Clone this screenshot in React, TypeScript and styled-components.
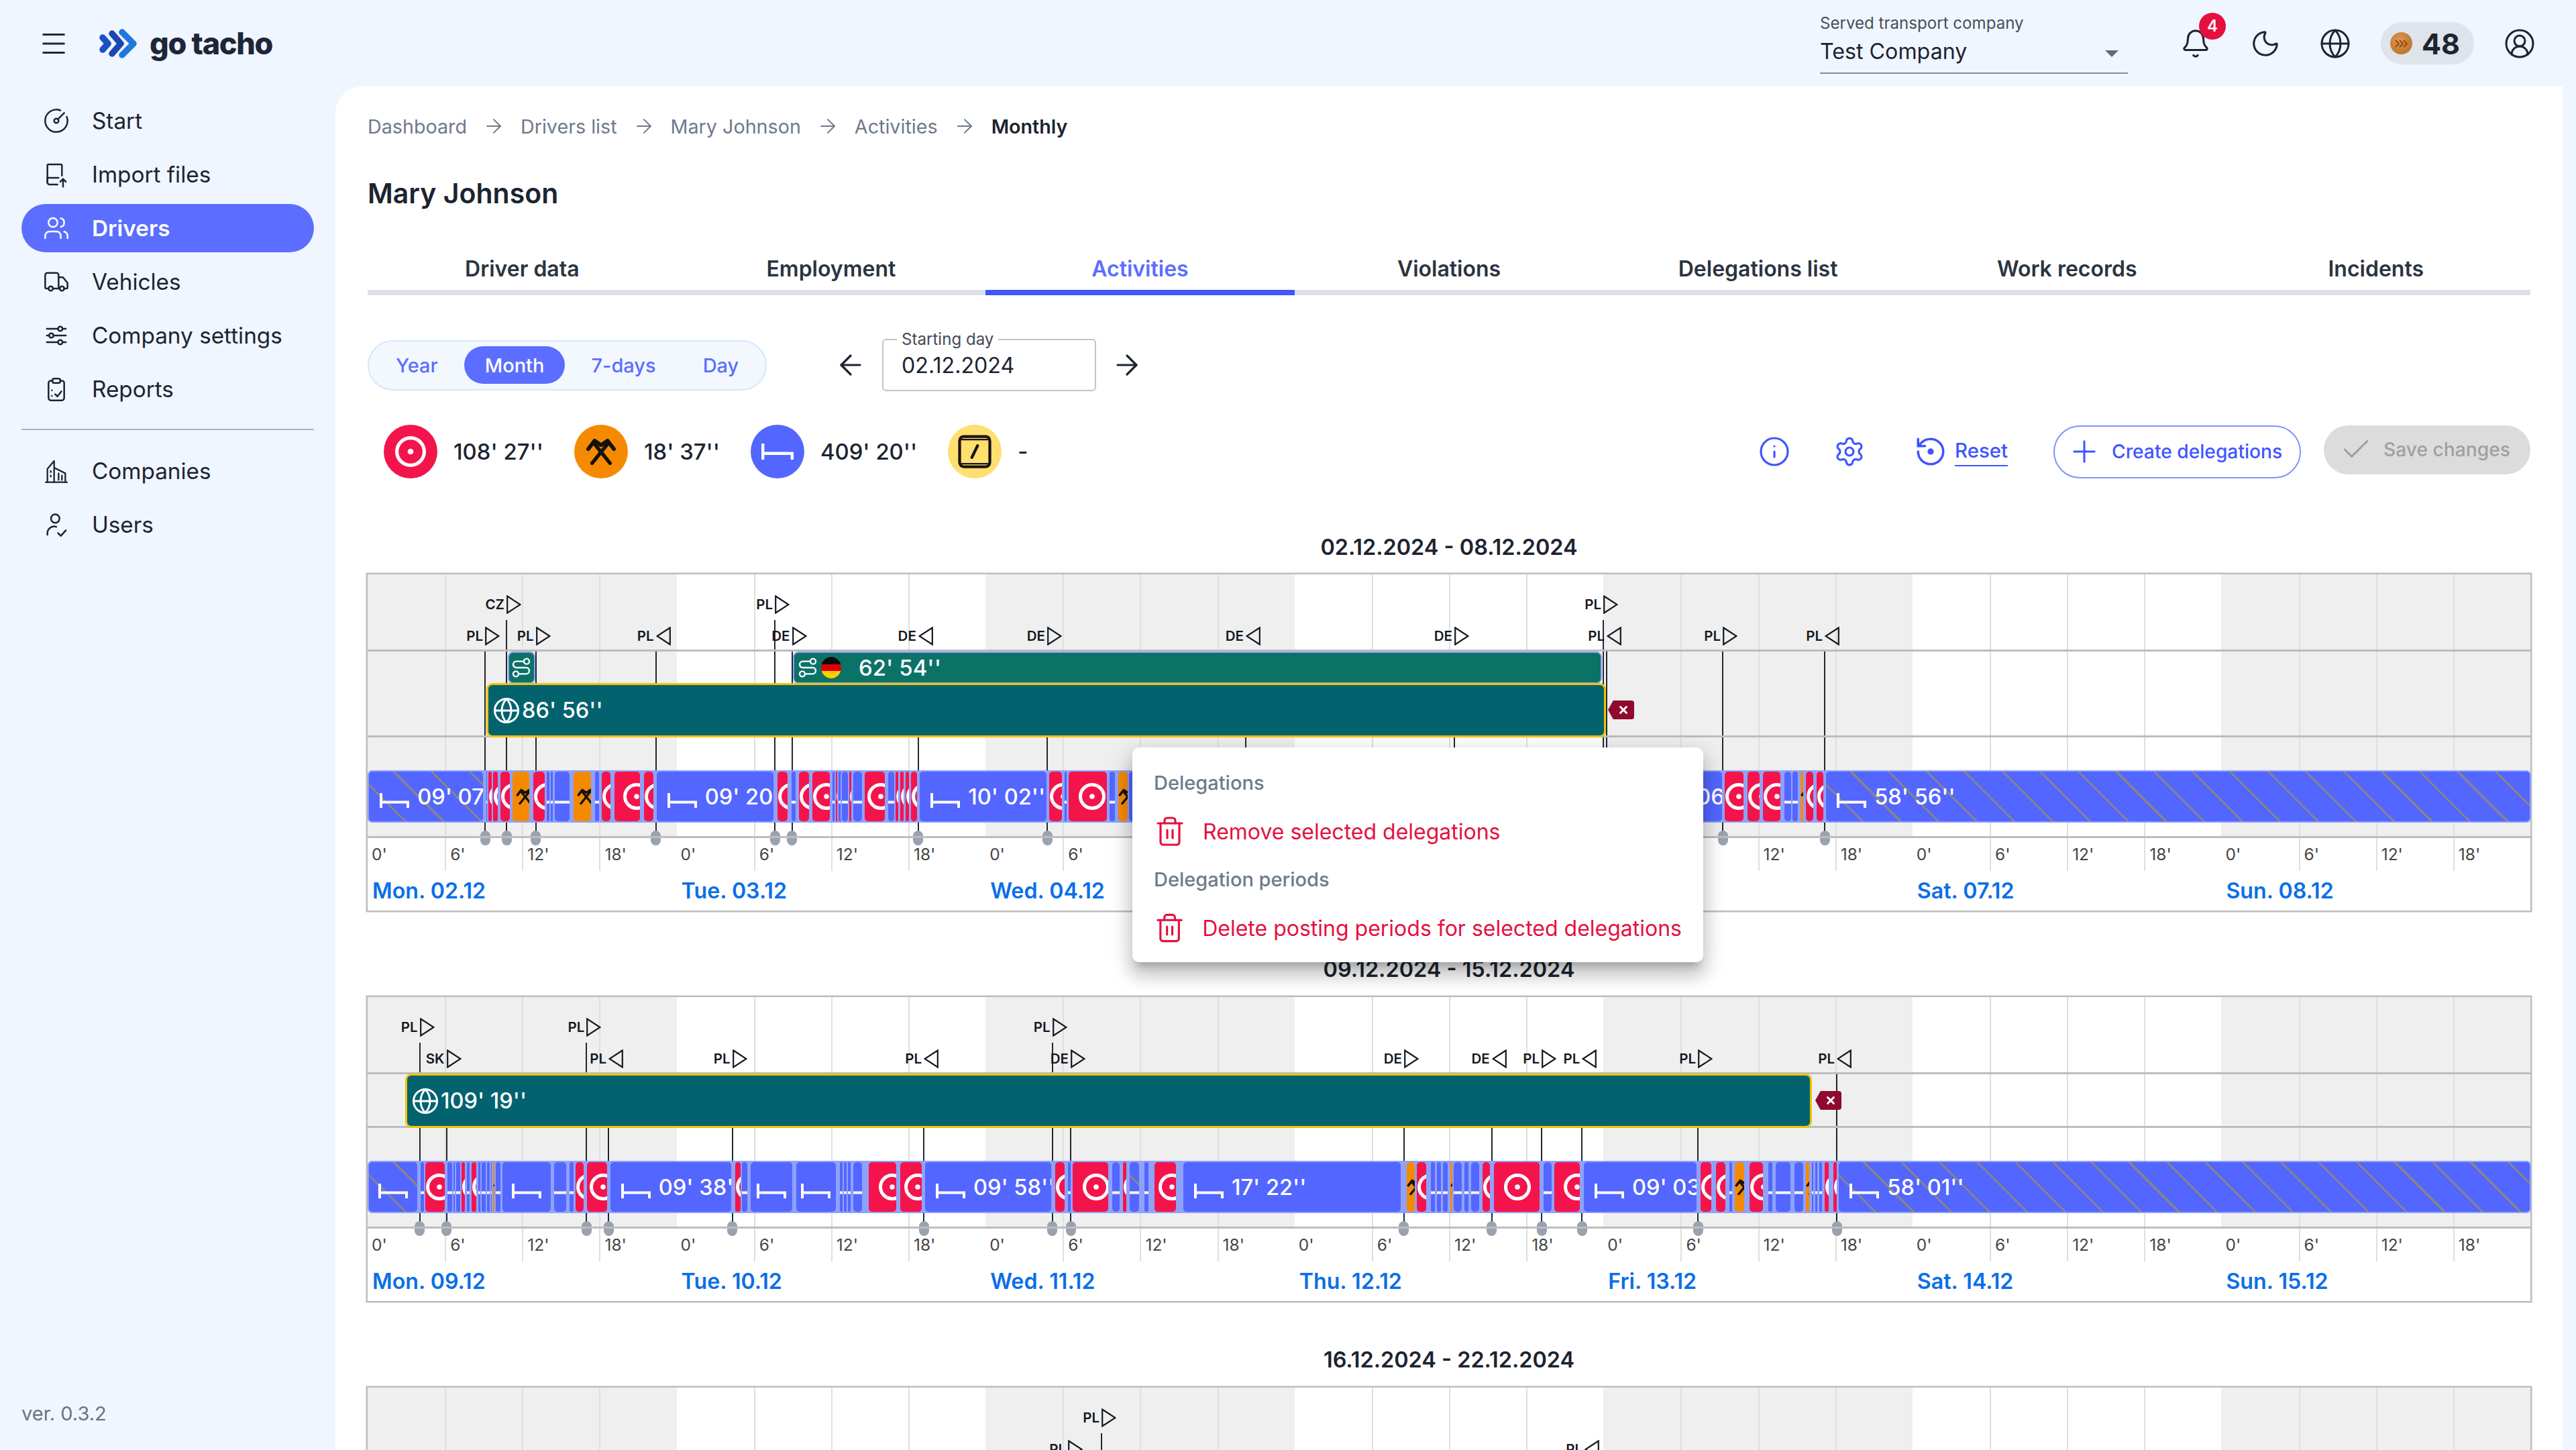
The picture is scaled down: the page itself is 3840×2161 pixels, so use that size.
import React from 'react'
import styled, { createGlobalStyle } from 'styled-components'
import {
  ArrowLeft,
  ArrowRight,
  Bell,
  Check,
  CircleGauge,
  CircleUserRound,
  Globe,
  Info,
  Menu,
  Moon,
  Plus,
  Route,
  Settings,
  Trash2,
  Truck,
  Users,
  X,
} from 'lucide-react'

const ORIGIN = 548
const BLUE = '#5366ff'
const RED = '#f4144b'
const ORANGE = '#f58a00'
const EDGE = '#8ea2fa'

const GlobalStyle = createGlobalStyle`
  html, body { margin: 0; padding: 0; background: #f0f6ff; overflow: hidden; }
  body { font-family: Inter, "Liberation Sans", sans-serif; color: #1f2937; }
  * { box-sizing: border-box; }
`

type SegKind = 'r' | 'h' | 'd' | 'w'
type SegRow = [SegKind, number, number, string?]
type Marker = { x: number; code: string; dir: 'in' | 'out'; row: 0 | 1 }

const scaled = (offset: number, rows: SegRow[]) =>
  rows.map(([k, a, b, label]) => [k, a / 1.3067 + offset, b / 1.3067 + offset, label] as SegRow)

const week1Segments: SegRow[] = [
  ...scaled(530, [
    ['h', 25, 250, "09' 07''"],
    ['r', 254, 262],
    ['d', 258, 266],
    ['d', 266, 278],
    ['d', 281, 302],
    ['w', 305, 340],
    ['d', 345, 370],
    ['r', 371, 379],
    ['r', 379, 386],
    ['r', 387, 418],
    ['w', 423, 460],
    ['r', 465, 476],
    ['d', 478, 498],
    ['d', 503, 555],
    ['d', 560, 582],
    ['r', 585, 815, "09' 20''"],
    ['d', 820, 843],
    ['r', 848, 859],
    ['d', 862, 884],
    ['d', 888, 925],
    ['r', 928, 935],
    ['d', 934, 941],
    ['r', 940, 947],
    ['r', 946, 960],
    ['d', 960, 967],
    ['r', 968, 988],
    ['d', 990, 1032],
    ['r', 1036, 1050],
    ['d', 1050, 1059],
    ['d', 1060, 1069],
    ['d', 1070, 1079],
    ['d', 1080, 1095],
    ['r', 1098, 1347, "10' 02''"],
    ['d', 1350, 1377],
    ['r', 1380, 1386],
    ['d', 1388, 1465],
    ['r', 1468, 1481],
    ['w', 1484, 1505],
    ['r', 1505, 1620],
  ]),
  ...scaled(1600, [
    ['r', 1040, 1265, "09' 06''"],
    ['d', 1268, 1307],
    ['d', 1312, 1338],
    ['d', 1342, 1378],
    ['r', 1384, 1400],
    ['r', 1400, 1412],
    ['w', 1415, 1423],
    ['d', 1425, 1442],
    ['d', 1447, 1462],
    ['h', 1465, 2838, "58' 56''"],
  ]),
]

const week2Segments: SegRow[] = [
  ...scaled(530, [
    ['h', 25, 122],
    ['r', 126, 134],
    ['d', 135, 175],
    ['r', 178, 190],
    ['r', 190, 196],
    ['r', 195, 205],
    ['d', 205, 214],
    ['r', 215, 223],
    ['d', 225, 236],
    ['r', 238, 246],
    ['r', 245, 256],
    ['r', 255, 263],
    ['r', 262, 269],
    ['w', 267, 272],
    ['r', 272, 284],
    ['r', 285, 382],
    ['r', 386, 411],
    ['r', 416, 426],
    ['d', 427, 445],
    ['d', 450, 491],
    ['r', 495, 733, "09' 38''"],
    ['d', 738, 751],
    ['r', 752, 765],
    ['r', 768, 852],
    ['r', 857, 937],
    ['r', 942, 951],
    ['r', 950, 959],
    ['r', 958, 966],
    ['r', 968, 988],
    ['d', 998, 1054],
    ['d', 1060, 1104],
    ['r', 1108, 1356, "09' 58''"],
    ['d', 1362, 1382],
    ['r', 1386, 1394],
    ['d', 1396, 1468],
    ['r', 1473, 1490],
    ['d', 1494, 1503],
    ['h', 1506, 1528],
    ['r', 1535, 1546],
    ['d', 1555, 1599],
    ['r', 1611, 2037, "17' 22''"],
  ]),
  ...scaled(1900, [
    ['w', 256, 274],
    ['d', 276, 297],
    ['r', 303, 313],
    ['r', 315, 326],
    ['r', 327, 339],
    ['w', 341, 347],
    ['r', 348, 366],
    ['r', 368, 379],
    ['r', 382, 400],
    ['d', 404, 421],
    ['d', 426, 518],
    ['r', 523, 541],
    ['d', 543, 596],
    ['r', 601, 823, "09' 03''"],
    ['d', 828, 852],
    ['d', 858, 879],
    ['r', 884, 892],
    ['w', 895, 916],
    ['d', 924, 952],
    ['r', 960, 971],
    ['r', 975, 1006],
    ['r', 1012, 1031],
    ['w', 1034, 1043],
    ['r', 1045, 1051],
    ['r', 1052, 1059],
    ['r', 1060, 1067],
    ['d', 1070, 1081],
    ['d', 1087, 1096],
    ['h', 1098, 2446, "58' 01''"],
  ]),
]

const week1Markers: Marker[] = [
  { x: 723, code: 'PL', dir: 'in', row: 1 },
  { x: 755, code: 'CZ', dir: 'in', row: 0 },
  { x: 798.6, code: 'PL', dir: 'in', row: 1 },
  { x: 977.7, code: 'PL', dir: 'out', row: 1 },
  { x: 1155, code: 'PL', dir: 'in', row: 0 },
  { x: 1180.5, code: 'DE', dir: 'in', row: 1 },
  { x: 1368.8, code: 'DE', dir: 'out', row: 1 },
  { x: 1561, code: 'DE', dir: 'in', row: 1 },
  { x: 1857, code: 'DE', dir: 'out', row: 1 },
  { x: 2168, code: 'DE', dir: 'in', row: 1 },
  { x: 2390, code: 'PL', dir: 'in', row: 0 },
  { x: 2395, code: 'PL', dir: 'out', row: 1 },
  { x: 2568, code: 'PL', dir: 'in', row: 1 },
  { x: 2720, code: 'PL', dir: 'out', row: 1 },
]

const week2Markers: Marker[] = [
  { x: 625.7, code: 'PL', dir: 'in', row: 0 },
  { x: 665.5, code: 'SK', dir: 'in', row: 1 },
  { x: 874.4, code: 'PL', dir: 'in', row: 0 },
  { x: 907, code: 'PL', dir: 'out', row: 1 },
  { x: 1091.7, code: 'PL', dir: 'in', row: 1 },
  { x: 1377, code: 'PL', dir: 'out', row: 1 },
  { x: 1568.5, code: 'PL', dir: 'in', row: 0 },
  { x: 1596, code: 'DE', dir: 'in', row: 1 },
  { x: 2092.9, code: 'DE', dir: 'in', row: 1 },
  { x: 2223.7, code: 'DE', dir: 'out', row: 1 },
  { x: 2298, code: 'PL', dir: 'in', row: 1 },
  { x: 2358.4, code: 'PL', dir: 'out', row: 1 },
  { x: 2531, code: 'PL', dir: 'in', row: 1 },
  { x: 2738, code: 'PL', dir: 'out', row: 1 },
]

const week3Markers: Marker[] = [
  { x: 1642, code: 'PL', dir: 'in', row: 0 },
  { x: 1592, code: 'PL', dir: 'in', row: 1 },
  { x: 2362, code: 'PL', dir: 'out', row: 1 },
]

const Page = styled.div`
  position: relative;
  width: 3840px;
  height: 2161px;
  overflow: hidden;
  display: grid;
  grid-template-columns: 500px 3320px;
  grid-template-rows: 129px 2032px;
  background: #f0f6ff;
`

const Header = styled.header`
  grid-column: 1 / -1;
  display: flex;
  align-items: center;
  padding: 0 40px 0 57px;
`

const LogoWrap = styled.div`
  display: flex;
  align-items: center;
  gap: 12px;
  margin-left: 44px;
`

const LogoText = styled.span`
  font-size: 45px;
  font-weight: 800;
  letter-spacing: -1.3px;
  color: #1e2738;
`

const HeaderRight = styled.div`
  margin-left: auto;
  display: flex;
  align-items: center;
  gap: 56px;
`

const CompanySelect = styled.div`
  position: relative;
  width: 459px;
  height: 90px;
  margin-right: 21px;
  border-bottom: 2px solid #8d8d8d;
`

const SelectLabel = styled.div`
  font-size: 24.1px;
  line-height: 30px;
  color: #4a4f57;
`

const SelectValue = styled.div`
  font-size: 32.2px;
  line-height: 42px;
  margin-top: 6px;
  color: #1c2430;
`

const Caret = styled.span`
  position: absolute;
  right: 14px;
  top: 55px;
  border-left: 10px solid transparent;
  border-right: 10px solid transparent;
  border-top: 10px solid #6b6b6b;
`

const HeaderIcon = styled.div`
  position: relative;
  width: 48px;
  height: 48px;
  display: flex;
  align-items: center;
  justify-content: center;
  color: #1c2430;
`

const Badge = styled.span`
  position: absolute;
  left: 29px;
  top: -22px;
  width: 40px;
  height: 40px;
  border-radius: 50%;
  background: #e5103f;
  color: #fff;
  font-size: 24px;
  font-weight: 600;
  display: flex;
  align-items: center;
  justify-content: center;
`

const CoinPill = styled.div`
  display: flex;
  align-items: center;
  gap: 14px;
  width: 139px;
  height: 63px;
  margin: 0 -12px;
  padding-left: 14px;
  border-radius: 32px;
  background: #dfe3ea;
  font-size: 43px;
  font-weight: 700;
  color: #1c2430;
`

const Coin = styled.span`
  width: 33px;
  height: 33px;
  flex: none;
  border-radius: 50%;
  display: flex;
  align-items: center;
  justify-content: center;
  background: radial-gradient(circle at 40% 35%, #dc9650, #b56a22);
`

const Sidebar = styled.aside`
  position: relative;
  padding-top: 11px;
`

const NavList = styled.nav`
  display: flex;
  flex-direction: column;
`

const NavItem = styled.div<{ $active?: boolean }>`
  display: flex;
  align-items: center;
  gap: 33px;
  width: 436px;
  height: 72px;
  margin: 4px 0 4px 32px;
  padding-left: 32px;
  border-radius: 36px;
  font-size: 33.3px;
  font-weight: ${(p) => (p.$active ? 600 : 400)};
  color: ${(p) => (p.$active ? '#fff' : '#1c2430')};
  background: ${(p) => (p.$active ? '#5b6eff' : 'transparent')};
`

const NavDivider = styled.hr`
  width: 436px;
  height: 2px;
  margin: 19px 0 21px 32px;
  border: 0;
  background: #aab0bb;
`

const Version = styled.div`
  position: absolute;
  left: 32px;
  bottom: 37px;
  font-size: 29px;
  color: #6b7280;
`

const Main = styled.main`
  background: #fff;
  border-top-left-radius: 40px;
  padding: 39px 48px 0;
  overflow: hidden;
`

const Breadcrumbs = styled.div`
  display: flex;
  align-items: center;
  gap: 23px;
  height: 40px;
  font-size: 28.7px;
  color: #6d7a8c;
`

const CrumbCurrent = styled.span`
  color: #1c2430;
  font-weight: 600;
`

const PageTitle = styled.h1`
  margin: 50px 0 0;
  height: 60px;
  line-height: 60px;
  font-size: 41px;
  font-weight: 600;
  color: #1c2430;
`

const Tabs = styled.div`
  display: flex;
  height: 80px;
  margin-top: 42px;
  border-bottom: 8px solid #dde0e6;
`

const Tab = styled.div<{ $active?: boolean }>`
  flex: 1;
  height: 80px;
  padding-top: 19px;
  text-align: center;
  font-size: 32px;
  line-height: 44px;
  font-weight: 600;
  color: ${(p) => (p.$active ? '#5b6eff' : '#2b3440')};
  border-bottom: 8px solid ${(p) => (p.$active ? '#3f55ff' : 'transparent')};
`

const RangeRow = styled.div`
  display: flex;
  align-items: center;
  height: 78px;
  margin-top: 65px;
`

const RangeToggle = styled.div`
  display: flex;
  align-items: center;
  gap: 8px;
  width: 595px;
  height: 75px;
  padding: 0 9px;
  border: 2px solid #d6e6fc;
  border-radius: 38px;
  background: #f3f8ff;
`

const RangeOption = styled.div<{ $active?: boolean }>`
  height: 56px;
  padding: 0 31px;
  display: flex;
  align-items: center;
  border-radius: 28px;
  font-size: 29px;
  font-weight: 500;
  white-space: nowrap;
  color: ${(p) => (p.$active ? '#fff' : '#5b6eff')};
  background: ${(p) => (p.$active ? '#5b6eff' : 'transparent')};
`

const ArrowButton = styled.div<{ $offset?: number }>`
  width: 48px;
  margin-left: ${(p) => p.$offset ?? 0}px;
  display: flex;
  justify-content: center;
  color: #1c2430;
`

const DateField = styled.div`
  position: relative;
  width: 319px;
  height: 78px;
  margin: 0 22px 0 23px;
  padding: 16px 27px 0;
  border: 2px solid #c4c4c4;
  border-radius: 6px;
  font-size: 32.2px;
  line-height: 44px;
  color: #1c2430;
`

const DateLabel = styled.span`
  position: absolute;
  left: 20px;
  top: -16px;
  padding: 0 7px;
  background: #fff;
  font-size: 24.1px;
  line-height: 30px;
  color: #444b55;
`

const ToolRow = styled.div`
  display: flex;
  align-items: center;
  height: 80px;
  margin-top: 50px;
`

const Stats = styled.div`
  display: flex;
  align-items: center;
  gap: 46px;
  padding-left: 24px;
`

const Stat = styled.div`
  display: flex;
  align-items: center;
  gap: 24px;
  font-size: 32.8px;
  font-weight: 500;
  color: #1c2430;
`

const StatCircle = styled.span<{ $bg: string }>`
  width: 80px;
  height: 80px;
  flex: none;
  border-radius: 50%;
  background: ${(p) => p.$bg};
  display: flex;
  align-items: center;
  justify-content: center;
`

const Actions = styled.div`
  margin-left: auto;
  display: flex;
  align-items: center;
  color: #3f55ff;
`

const ActionIcon = styled.span<{ $gap: number }>`
  display: flex;
  margin-right: ${(p) => p.$gap}px;
`

const ResetLink = styled.span`
  margin: 2px 68px 0 11px;
  font-size: 29.4px;
  font-weight: 500;
  padding-bottom: 4px;
  border-bottom: 2.5px solid #3f55ff;
`

const CreateButton = styled.div`
  display: flex;
  align-items: center;
  gap: 15px;
  width: 369px;
  height: 79px;
  padding-left: 18px;
  border: 2px solid #7f95f8;
  border-radius: 40px;
  font-size: 28.2px;
  font-weight: 500;
  white-space: nowrap;
`

const SaveButton = styled.div`
  display: flex;
  align-items: center;
  gap: 16px;
  width: 308px;
  height: 73px;
  margin: -6px 0 0 34px;
  padding-left: 23px;
  border-radius: 37px;
  background: #dcdcdc;
  color: #a0a0a0;
  font-size: 28.2px;
  font-weight: 500;
  white-space: nowrap;
`

const ChartTitle = styled.h2<{ $first?: boolean }>`
  margin: ${(p) => (p.$first ? '83px 0 20px' : '68px 0 21px')};
  height: 40px;
  line-height: 40px;
  text-align: center;
  font-size: 32.4px;
  font-weight: 600;
  color: #1c2430;
`

const Frame = styled.section`
  box-shadow: 0 0 0 2.5px #bdbdbd;
`

const Upper = styled.div`
  position: relative;
`

const Bands = styled.div`
  position: absolute;
  inset: 0;
  display: grid;
  grid-template-columns: repeat(7, 1fr);
`

const Band = styled.div<{ $shaded: boolean }>`
  display: grid;
  grid-template-columns: repeat(4, 1fr);
  background: ${(p) => (p.$shaded ? '#efefef' : '#fff')};
`

const BandSlot = styled.div`
  & + & {
    border-left: 2px solid #dfdfdf;
  }
`

const MarkerLayer = styled.div`
  position: absolute;
  inset: 0;
  z-index: 1;
`

const MarkerLine = styled.div<{ $row: 0 | 1 }>`
  position: absolute;
  top: ${(p) => (p.$row === 0 ? 68 : 115)}px;
  bottom: 0;
  width: 2px;
  background: #23272e;
`

const Knob = styled.span`
  position: absolute;
  left: -6.5px;
  bottom: -11px;
  width: 15px;
  height: 22px;
  border-radius: 8px;
  background: #9aa1b0;
`

const MarkerTag = styled.div<{ $row: 0 | 1 }>`
  position: absolute;
  top: ${(p) => (p.$row === 0 ? 31 : 78)}px;
  width: 22px;
  height: 28px;
`

const MarkerCode = styled.span`
  position: absolute;
  right: calc(100% + 3px);
  top: 0;
  line-height: 28px;
  font-size: 20.5px;
  font-weight: 600;
  color: #14181f;
`

const MarkerHead = styled.div`
  position: relative;
  z-index: 2;
  height: 115px;
  border-bottom: 3px solid #bdbdbd;
`

const DelegationRow = styled.div<{ $h: number; $last?: boolean }>`
  position: relative;
  z-index: 2;
  height: ${(p) => p.$h}px;
  border-bottom: ${(p) => (p.$last ? '3px solid #bdbdbd' : '0')};
`

const PostingBar = styled.div`
  position: absolute;
  top: 0;
  bottom: 0;
  display: flex;
  align-items: center;
  padding-left: 14px;
  border: 2.5px solid ${EDGE};
  border-radius: 8px;
  background: #0b7268;
  color: #fff;
  font-size: 33px;
  font-weight: 500;
  white-space: nowrap;
  overflow: hidden;
`

const Flag = styled.span`
  width: 30px;
  height: 32px;
  margin: 0 26px 0 4px;
  border-radius: 50%;
  background: linear-gradient(#0a0a0a 33%, #dd0000 33% 66%, #ffce00 66%);
`

const DelegationBar = styled.div`
  position: absolute;
  top: -1px;
  bottom: -3px;
  display: flex;
  align-items: center;
  gap: 2px;
  padding-left: 6px;
  border: 3px solid #f2c200;
  border-radius: 9px;
  background: #02636f;
  color: #fff;
  font-size: 32.5px;
  font-weight: 500;
`

const RemoveTag = styled.div`
  position: absolute;
  top: 25px;
  width: 39px;
  height: 28px;
  display: flex;
  align-items: center;
  justify-content: center;
  padding-left: 6px;
  background: #8f0a2e;
  color: #fff;
  clip-path: polygon(20% 0, 100% 0, 100% 100%, 20% 100%, 0 50%);
  border-radius: 4px;
`

const ActivityRow = styled.div`
  position: relative;
  z-index: 2;
  height: 150px;
  border-bottom: 3px solid #bdbdbd;
`

const ActivityTrack = styled.div`
  position: absolute;
  left: 0;
  right: 0;
  top: 49px;
  height: 78px;
  border-radius: 7px;
  background: ${EDGE};
`

const kindBackground: Record<SegKind, string> = {
  r: BLUE,
  h: `repeating-linear-gradient(45deg, ${BLUE} 0 37px, #85858a 37px 40px)`,
  d: RED,
  w: ORANGE,
}

const Segment = styled.div<{ $kind: SegKind; $center: boolean }>`
  position: absolute;
  top: 0;
  bottom: 0;
  display: flex;
  align-items: center;
  justify-content: ${(p) => (p.$center ? 'center' : 'flex-start')};
  border: 2px solid ${EDGE};
  border-radius: 7px;
  overflow: hidden;
  background: ${(p) => kindBackground[p.$kind]};
  color: #fff;
  font-size: 32.6px;
  font-weight: 500;
  white-space: nowrap;
`

const BedSlot = styled.span`
  display: flex;
  flex: none;
  margin-top: 12px;
`

const SegmentLabel = styled.span`
  flex: none;
  margin-left: 12px;
`

const TickRow = styled.div`
  display: grid;
  grid-template-columns: repeat(7, 1fr);
  height: 49px;
`

const TickDay = styled.div`
  display: grid;
  grid-template-columns: repeat(4, 1fr);
`

const Tick = styled.div`
  padding: 9px 0 0 6px;
  font-size: 24.5px;
  line-height: 30px;
  color: #444;
  & + & {
    border-left: 2px solid #dfdfdf;
  }
`

const DayRow = styled.div`
  display: grid;
  grid-template-columns: repeat(7, 1fr);
  height: 59px;
`

const DayName = styled.div`
  padding: 9px 0 0 7px;
  font-size: 32.2px;
  line-height: 42px;
  font-weight: 600;
  color: #0b6fe8;
`

const Popover = styled.div`
  position: absolute;
  left: 1688px;
  top: 1114px;
  z-index: 10;
  width: 851px;
  height: 320px;
  padding: 33px 32px 0;
  border-radius: 10px;
  background: #fff;
  box-shadow: 0 12px 12px -7px rgba(0, 0, 0, 0.2), 0 20px 24px 3px rgba(0, 0, 0, 0.14), 0 8px 34px 6px rgba(0, 0, 0, 0.12);
`

const PopoverHeading = styled.div`
  height: 40px;
  line-height: 40px;
  font-size: 29px;
  font-weight: 500;
  color: #6d7a8c;
`

const PopoverItem = styled.div`
  display: flex;
  align-items: center;
  gap: 25px;
  height: 72px;
  margin: 16px 0;
  font-size: 32px;
  white-space: nowrap;
  color: #e5103f;
`

const TargetGlyph = ({ size = 40, stroke = 5 }: { size?: number; stroke?: number }) => (
  <svg width={size} height={size} viewBox="0 0 40 40" style={{ flex: 'none' }}>
    <circle cx="20" cy="20" r={20 - stroke / 2} fill="none" stroke="#fff" strokeWidth={stroke} />
    <circle cx="20" cy="20" r="3.8" fill="#fff" />
  </svg>
)

const BedGlyph = ({ width = 44 }: { width?: number }) => (
  <svg width={width} height={width / 2} viewBox="0 0 44 22" style={{ flex: 'none' }}>
    <path d="M2 0v22M2 13.5h40V22" fill="none" stroke="#fff" strokeWidth="4" />
  </svg>
)

const HammerGlyph = ({ size = 28 }: { size?: number }) => (
  <svg width={size} height={size * 0.875} viewBox="0 0 24 21" style={{ flex: 'none' }}>
    <g fill="none" stroke="#14110d" strokeLinecap="round" strokeLinejoin="round">
      <path d="M5 19.5 16.8 4.8M19 19.5 7.2 4.8" strokeWidth="2.8" />
      <path d="M2 8.5 7 2l4.5 3.2M22 8.5 17 2l-4.5 3.2" strokeWidth="3" />
    </g>
  </svg>
)

const SegmentItem = ({ row }: { row: SegRow }) => {
  const [kind, from, to, label] = row
  const width = to - from + 2
  let content: React.ReactNode = null
  let paddingLeft = 0
  if (kind === 'd') {
    paddingLeft = width < 33 ? 1 : Math.min(15, (width - 33) * 1.2 + 3)
    content = <TargetGlyph />
  } else if (kind === 'w') {
    paddingLeft = width > 21 ? 5 : 0
    content = <HammerGlyph />
  } else if (label) {
    paddingLeft = 16
    content = (
      <>
        <BedSlot>
          <BedGlyph />
        </BedSlot>
        <SegmentLabel>{label}</SegmentLabel>
      </>
    )
  } else {
    content = (
      <BedSlot>
        <BedGlyph />
      </BedSlot>
    )
  }
  return (
    <Segment
      $kind={kind}
      $center={(kind === 'r' || kind === 'h') && !label}
      style={{ left: Math.max(0, from - 1 - ORIGIN), width, paddingLeft }}
    >
      {content}
    </Segment>
  )
}

const MarkerItem = ({ marker }: { marker: Marker }) => (
  <>
    <MarkerLine $row={marker.row} style={{ left: marker.x - ORIGIN - 1 }}>
      <Knob />
    </MarkerLine>
    <MarkerTag $row={marker.row} style={{ left: marker.x - ORIGIN }}>
      <MarkerCode>{marker.code}</MarkerCode>
      <svg width="22" height="28" viewBox="0 0 22 28" style={{ display: 'block' }}>
        <path
          d={marker.dir === 'in' ? 'M1.2 1.5 20.5 14 1.2 26.5Z' : 'M20.8 1.5 1.5 14l19.3 12.5Z'}
          fill="none"
          stroke="#14181f"
          strokeWidth="2.2"
        />
      </svg>
    </MarkerTag>
  </>
)

const days = [0, 1, 2, 3, 4, 5, 6]
const hours = ["0'", "6'", "12'", "18'"]

type WeekProps = {
  title: string
  first?: boolean
  dates: string[]
  markers: Marker[]
  segments: SegRow[]
  children: React.ReactNode
}

const WeekChart = ({ title, first, dates, markers, segments, children }: WeekProps) => (
  <>
    <ChartTitle $first={first}>{title}</ChartTitle>
    <Frame>
      <Upper>
        <Bands>
          {days.map((d) => (
            <Band key={d} $shaded={d % 2 === 0}>
              {hours.map((h) => (
                <BandSlot key={h} />
              ))}
            </Band>
          ))}
        </Bands>
        <MarkerLayer>
          {markers.map((m) => (
            <MarkerItem key={`${m.x}-${m.code}`} marker={m} />
          ))}
        </MarkerLayer>
        <MarkerHead />
        {children}
        <ActivityRow>
          <ActivityTrack>
            {segments.map((s, i) => (
              <SegmentItem key={i} row={s} />
            ))}
          </ActivityTrack>
        </ActivityRow>
      </Upper>
      <TickRow>
        {days.map((d) => (
          <TickDay key={d}>
            {hours.map((h) => (
              <Tick key={h}>{h}</Tick>
            ))}
          </TickDay>
        ))}
      </TickRow>
      <DayRow>
        {dates.map((d) => (
          <DayName key={d}>{d}</DayName>
        ))}
      </DayRow>
    </Frame>
  </>
)

const LogoMark = () => (
  <svg width="64" height="46" viewBox="0 0 64 46">
    <g fill="none" strokeWidth="9.5" strokeLinecap="round" strokeLinejoin="round">
      <path d="M6 14 14 23 6 32" stroke="#1d4fc4" />
      <path d="M20 8 33 23 20 38" stroke="#1c46b4" />
      <path d="M35 6 52 23 35 40" stroke="#1f78dc" />
    </g>
  </svg>
)

const ImportIcon = () => (
  <svg width="40" height="40" viewBox="0 0 24 24" fill="none" stroke="currentColor" strokeWidth="1.5" strokeLinecap="round" strokeLinejoin="round">
    <path d="M4 19V4a1 1 0 0 1 1-1h11a1 1 0 0 1 1 1v9" />
    <path d="M4 15h10M4 15v4a2 2 0 0 0 2 2h7" />
    <path d="M18 23v-7M15.5 18.5 18 16l2.5 2.5" />
  </svg>
)

const SettingsRowsIcon = () => (
  <svg width="40" height="40" viewBox="0 0 24 24" fill="none" stroke="currentColor" strokeWidth="1.5" strokeLinecap="round">
    <path d="M3.5 6h10M17.5 6h3M3.5 12h2M9.5 12h11M3.5 18h10M17.5 18h3" />
    <circle cx="15.5" cy="6" r="2" />
    <circle cx="7.5" cy="12" r="2" />
    <circle cx="15.5" cy="18" r="2" />
  </svg>
)

const ReportIcon = () => (
  <svg width="40" height="40" viewBox="0 0 24 24" fill="none" stroke="currentColor" strokeWidth="1.5" strokeLinecap="round" strokeLinejoin="round">
    <path d="M8.5 4.5H7a2 2 0 0 0-2 2V20a2 2 0 0 0 2 2h10a2 2 0 0 0 2-2V6.5a2 2 0 0 0-2-2h-1.5" />
    <rect x="8.5" y="2.5" width="7" height="4" rx="1.5" />
    <path d="M8 13h.01M8 18h.01M11 16.5l2 2 3.5-4.5" />
  </svg>
)

const BuildingIcon = () => (
  <svg width="40" height="40" viewBox="0 0 24 24" fill="none" stroke="currentColor" strokeWidth="1.4" strokeLinecap="round" strokeLinejoin="round">
    <path d="M2.5 22h19" />
    <path d="M4 22V10l6-7v19M10 9l10 5v8" />
    <path d="M7 12v1M7 16v1M14 14v6M17 16v4" />
  </svg>
)

const DriverIcon = () => (
  <svg width="40" height="40" viewBox="0 0 24 24" fill="none" stroke="currentColor" strokeWidth="1.5" strokeLinecap="round" strokeLinejoin="round">
    <circle cx="11" cy="6.5" r="3.8" />
    <path d="M4 21v-1.5a6 6 0 0 1 8-5.6" />
    <path d="m13.5 19.5 2.5 2.5 4.5-5" />
  </svg>
)

const ResetIcon = () => (
  <svg width="50" height="50" viewBox="0 0 24 24" fill="none" stroke="currentColor" strokeWidth="1.7" strokeLinecap="round" strokeLinejoin="round">
    <path d="M3 12a9 9 0 1 0 9-9 9.75 9.75 0 0 0-6.74 2.74L3 8" />
    <path d="M3 3v5h5" />
    <circle cx="12" cy="12" r="1.4" fill="currentColor" />
  </svg>
)

const LogbookIcon = () => (
  <svg width="60" height="60" viewBox="0 0 24 24" fill="none" stroke="#1a1410" strokeLinecap="round">
    <rect x="3" y="3" width="18" height="18" rx="2.5" strokeWidth="1.7" />
    <path d="M4 4.8h16M4 19.2h16" strokeWidth="0.9" />
    <path d="m10.3 15.5 3.4-7" strokeWidth="1.7" />
  </svg>
)

const App = () => (
  <Page>
    <GlobalStyle />
    <Header>
      <Menu size={46} strokeWidth={1.6} />
      <LogoWrap>
        <LogoMark />
        <LogoText>go tacho</LogoText>
      </LogoWrap>
      <HeaderRight>
        <CompanySelect>
          <SelectLabel>Served transport company</SelectLabel>
          <SelectValue>Test Company</SelectValue>
          <Caret />
        </CompanySelect>
        <HeaderIcon>
          <Bell size={46} strokeWidth={1.6} />
          <Badge>4</Badge>
        </HeaderIcon>
        <HeaderIcon>
          <Moon size={46} strokeWidth={1.6} />
        </HeaderIcon>
        <HeaderIcon>
          <Globe size={48} strokeWidth={1.5} />
        </HeaderIcon>
        <CoinPill>
          <Coin>
            <svg width="22" height="14" viewBox="0 0 22 14" fill="none" stroke="#8a4a10" strokeWidth="1.8">
              <path d="m2 2 5 5-5 5M8 2l5 5-5 5M14 2l5 5-5 5" />
            </svg>
          </Coin>
          48
        </CoinPill>
        <HeaderIcon>
          <CircleUserRound size={48} strokeWidth={1.5} />
        </HeaderIcon>
      </HeaderRight>
    </Header>

    <Sidebar>
      <NavList>
        <NavItem>
          <CircleGauge size={40} strokeWidth={1.5} />
          Start
        </NavItem>
        <NavItem>
          <ImportIcon />
          Import files
        </NavItem>
        <NavItem $active>
          <Users size={40} strokeWidth={1.5} />
          Drivers
        </NavItem>
        <NavItem>
          <Truck size={40} strokeWidth={1.5} />
          Vehicles
        </NavItem>
        <NavItem>
          <SettingsRowsIcon />
          Company settings
        </NavItem>
        <NavItem>
          <ReportIcon />
          Reports
        </NavItem>
        <NavDivider />
        <NavItem>
          <BuildingIcon />
          Companies
        </NavItem>
        <NavItem>
          <DriverIcon />
          Users
        </NavItem>
      </NavList>
      <Version>ver. 0.3.2</Version>
    </Sidebar>

    <Main>
      <Breadcrumbs>
        <span>Dashboard</span>
        <ArrowRight size={34} strokeWidth={1.4} />
        <span>Drivers list</span>
        <ArrowRight size={34} strokeWidth={1.4} />
        <span>Mary Johnson</span>
        <ArrowRight size={34} strokeWidth={1.4} />
        <span>Activities</span>
        <ArrowRight size={34} strokeWidth={1.4} />
        <CrumbCurrent>Monthly</CrumbCurrent>
      </Breadcrumbs>
      <PageTitle>Mary Johnson</PageTitle>
      <Tabs>
        <Tab>Driver data</Tab>
        <Tab>Employment</Tab>
        <Tab $active>Activities</Tab>
        <Tab>Violations</Tab>
        <Tab>Delegations list</Tab>
        <Tab>Work records</Tab>
        <Tab>Incidents</Tab>
      </Tabs>

      <RangeRow>
        <RangeToggle>
          <RangeOption>Year</RangeOption>
          <RangeOption $active>Month</RangeOption>
          <RangeOption>7-days</RangeOption>
          <RangeOption>Day</RangeOption>
        </RangeToggle>
        <ArrowButton $offset={101}>
          <ArrowLeft size={48} strokeWidth={1.6} />
        </ArrowButton>
        <DateField>
          <DateLabel>Starting day</DateLabel>
          02.12.2024
        </DateField>
        <ArrowButton>
          <ArrowRight size={48} strokeWidth={1.6} />
        </ArrowButton>
      </RangeRow>

      <ToolRow>
        <Stats>
          <Stat>
            <StatCircle $bg={RED}>
              <TargetGlyph size={46} stroke={4.5} />
            </StatCircle>
            108' 27''
          </Stat>
          <Stat>
            <StatCircle $bg={ORANGE}>
              <HammerGlyph size={46} />
            </StatCircle>
            18' 37''
          </Stat>
          <Stat>
            <StatCircle $bg={BLUE}>
              <BedGlyph width={48} />
            </StatCircle>
            409' 20''
          </Stat>
          <Stat>
            <StatCircle $bg="#ffdf6e">
              <LogbookIcon />
            </StatCircle>
            -
          </Stat>
        </Stats>
        <Actions>
          <ActionIcon $gap={64}>
            <Info size={48} strokeWidth={1.6} />
          </ActionIcon>
          <ActionIcon $gap={72}>
            <Settings size={48} strokeWidth={1.6} />
          </ActionIcon>
          <ActionIcon $gap={0}>
            <ResetIcon />
          </ActionIcon>
          <ResetLink>Reset</ResetLink>
          <CreateButton>
            <Plus size={52} strokeWidth={1.4} />
            Create delegations
          </CreateButton>
          <SaveButton>
            <Check size={50} strokeWidth={1.5} />
            Save changes
          </SaveButton>
        </Actions>
      </ToolRow>

      <WeekChart
        first
        title="02.12.2024 - 08.12.2024"
        dates={['Mon. 02.12', 'Tue. 03.12', 'Wed. 04.12', 'Thu. 05.12', 'Fri. 06.12', 'Sat. 07.12', 'Sun. 08.12']}
        markers={week1Markers}
        segments={week1Segments}
      >
        <DelegationRow $h={48}>
          <PostingBar style={{ left: 756.5 - ORIGIN, width: 41.5, paddingLeft: 2 }}>
            <Route size={32} strokeWidth={1.8} style={{ flex: 'none' }} />
          </PostingBar>
          <PostingBar style={{ left: 1182 - ORIGIN, width: 1206, paddingLeft: 4 }}>
            <Route size={32} strokeWidth={1.8} style={{ flex: 'none' }} />
            <Flag />
            62' 54''
          </PostingBar>
        </DelegationRow>
        <DelegationRow $h={80} $last>
          <DelegationBar style={{ left: 725 - ORIGIN, width: 1669 }}>
            <Globe size={42} strokeWidth={1.7} />
            86' 56''
          </DelegationBar>
          <RemoveTag style={{ left: 2397 - ORIGIN }}>
            <X size={18} strokeWidth={4} />
          </RemoveTag>
        </DelegationRow>
      </WeekChart>

      <WeekChart
        title="09.12.2024 - 15.12.2024"
        dates={['Mon. 09.12', 'Tue. 10.12', 'Wed. 11.12', 'Thu. 12.12', 'Fri. 13.12', 'Sat. 14.12', 'Sun. 15.12']}
        markers={week2Markers}
        segments={week2Segments}
      >
        <DelegationRow $h={80} $last>
          <DelegationBar style={{ left: 604 - ORIGIN, width: 2097 }}>
            <Globe size={42} strokeWidth={1.7} />
            109' 19''
          </DelegationBar>
          <RemoveTag style={{ left: 2706 - ORIGIN }}>
            <X size={18} strokeWidth={4} />
          </RemoveTag>
        </DelegationRow>
      </WeekChart>

      <WeekChart
        title="16.12.2024 - 22.12.2024"
        dates={['Mon. 16.12', 'Tue. 17.12', 'Wed. 18.12', 'Thu. 19.12', 'Fri. 20.12', 'Sat. 21.12', 'Sun. 22.12']}
        markers={week3Markers}
        segments={[]}
      >
        <DelegationRow $h={80} $last />
      </WeekChart>
    </Main>

    <Popover>
      <PopoverHeading>Delegations</PopoverHeading>
      <PopoverItem>
        <Trash2 size={48} strokeWidth={1.6} />
        Remove selected delegations
      </PopoverItem>
      <PopoverHeading>Delegation periods</PopoverHeading>
      <PopoverItem>
        <Trash2 size={48} strokeWidth={1.6} />
        Delete posting periods for selected delegations
      </PopoverItem>
    </Popover>
  </Page>
)

export default App
